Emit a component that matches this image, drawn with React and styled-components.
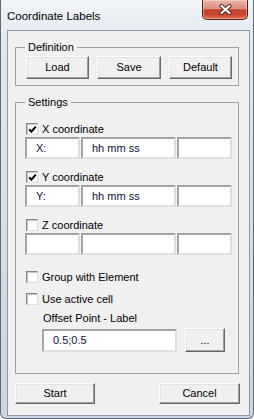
import React from "react";
import styled, { createGlobalStyle } from "styled-components";

const GlobalStyle = createGlobalStyle`
  html, body { margin: 0; padding: 0; background: #ffffff; }
  body { font-family: "Liberation Sans", Arial, sans-serif; }
`;

const Window = styled.div`
  box-sizing: border-box;
  width: 254px;
  height: 419px;
  display: flex;
  flex-direction: column;
  border: 1px solid #5f6b78;
  border-top: none;
  border-radius: 0 0 6px 6px;
  background: linear-gradient(180deg, #f1f4f8 0%, #e2e9f1 10%, #d3dde8 60%, #cbd6e2 100%);
  padding: 0 3px 2px 6px;
  font: 11px/13px "Liberation Sans", Arial, sans-serif;
  color: #000;
`;

const TitleBar = styled.div`
  flex: none;
  height: 30px;
  display: flex;
  align-items: flex-start;
`;

const Title = styled.div`
  margin-top: 10px;
  font-size: 11.5px;
  line-height: 13px;
  color: #000;
`;

const CloseButton = styled.div`
  box-sizing: border-box;
  margin-left: auto;
  margin-right: 2px;
  width: 46px;
  height: 20px;
  display: flex;
  align-items: center;
  justify-content: center;
  border: 1px solid #5b1e16;
  border-top: none;
  border-radius: 0 0 5px 5px;
  background: linear-gradient(180deg, #ecb4a8 0%, #dc8f80 45%, #c4432c 52%, #c9472f 78%, #de7450 100%);
  box-shadow: inset 0 0 0 1px rgba(255, 255, 255, 0.35);
`;

const Client = styled.div`
  flex: 1;
  display: flex;
  flex-direction: column;
  background: #f0f0f0;
  border: 1px solid #8c99a8;
`;

const Group = styled.fieldset`
  box-sizing: border-box;
  width: 224px;
  margin: 9px 0 0 7px;
  padding: 0;
  border: 1px solid #a0a0a0;
  min-inline-size: 0;
`;

const GroupLabel = styled.legend`
  margin-left: 9px;
  padding: 0 3px;
  font-size: 11px;
  line-height: 14px;
  color: #000;
`;

const ButtonRow = styled.div`
  display: grid;
  grid-template-columns: 63px 64px 63px;
  column-gap: 8px;
  padding: 2px 0 6px 10px;
`;

const Button = styled.button`
  box-sizing: border-box;
  width: ${(p) => (p.$w ? `${p.$w}px` : "auto")};
  height: ${(p) => p.$h || 23}px;
  margin: 0;
  padding: 0;
  background: #f0f0f0;
  border: 1px solid;
  border-color: #ffffff #696969 #696969 #ffffff;
  box-shadow: inset -1px -1px 0 #a0a0a0, inset 1px 1px 0 #e3e3e3;
  font: 11px/13px "Liberation Sans", Arial, sans-serif;
  color: #000;
`;

const SettingsBody = styled.div`
  display: flex;
  flex-direction: column;
  align-items: flex-start;
  padding: 0 0 21px 9px;
`;

const CheckRow = styled.label`
  display: flex;
  align-items: center;
  gap: 4px;
  height: 12px;
  margin: ${(p) => p.$mt || 0}px 0 0 1px;
  color: #000;
`;

const Box = styled.span`
  box-sizing: border-box;
  flex: none;
  width: 12px;
  height: 12px;
  display: flex;
  align-items: center;
  justify-content: center;
  background: #fff;
  border: 1px solid;
  border-color: #858585 #dcdcdc #dcdcdc #858585;
  box-shadow: inset 1px 1px 0 #c4c4c4;
`;

const FieldRow = styled.div`
  display: grid;
  grid-template-columns: 55px 95px 55px;
  column-gap: 1px;
  margin-top: 2px;
`;

const Field = styled.div`
  box-sizing: border-box;
  width: ${(p) => (p.$w ? `${p.$w}px` : "auto")};
  height: ${(p) => p.$h || 22}px;
  display: flex;
  align-items: center;
  padding-left: 9px;
  background: #fff;
  border: 2px solid;
  border-color: #a4a4a4 #dedede #dedede #a4a4a4;
  color: #101038;
  white-space: nowrap;
`;

const OffsetLabel = styled.div`
  margin: 7px 0 0 18px;
  line-height: 13px;
  color: #000;
`;

const OffsetRow = styled.div`
  display: flex;
  align-items: center;
  gap: 8px;
  margin: 3px 0 0 17px;
`;

const Footer = styled.div`
  display: flex;
  justify-content: space-between;
  margin-top: 9px;
  padding: 0 9px 0 7px;
`;

const Check = ({ checked }) => (
  <Box>
    {checked && (
      <svg width="9" height="9" viewBox="0 0 9 9">
        <path d="M1.2 4.2 L3.4 6.6 L7.8 1.6" fill="none" stroke="#000" strokeWidth="2.1" />
      </svg>
    )}
  </Box>
);

const CoordBlock = ({ label, checked, mt, a, b }) => (
  <>
    <CheckRow $mt={mt}>
      <Check checked={checked} />
      {label}
    </CheckRow>
    <FieldRow>
      <Field>{a}</Field>
      <Field>{b}</Field>
      <Field />
    </FieldRow>
  </>
);

export default function App() {
  return (
    <>
      <GlobalStyle />
      <Window>
        <TitleBar>
          <Title>Coordinate Labels</Title>
          <CloseButton>
            <svg width="13" height="11" viewBox="0 0 13 11">
              <path d="M2.5 2 L10.5 9 M10.5 2 L2.5 9" stroke="#3b2420" strokeWidth="4" strokeLinecap="round" />
              <path d="M2.5 2 L10.5 9 M10.5 2 L2.5 9" stroke="#ffffff" strokeWidth="2.2" strokeLinecap="round" />
            </svg>
          </CloseButton>
        </TitleBar>
        <Client>
          <Group>
            <GroupLabel>Definition</GroupLabel>
            <ButtonRow>
              <Button>Load</Button>
              <Button>Save</Button>
              <Button>Default</Button>
            </ButtonRow>
          </Group>
          <Group>
            <GroupLabel>Settings</GroupLabel>
            <SettingsBody>
              <CoordBlock label="X coordinate" checked mt={14} a="X:" b="hh mm ss" />
              <CoordBlock label="Y coordinate" checked mt={12} a="Y:" b="hh mm ss" />
              <CoordBlock label="Z coordinate" mt={12} />
              <CheckRow $mt={16}>
                <Check />
                Group with Element
              </CheckRow>
              <CheckRow $mt={10}>
                <Check />
                Use active cell
              </CheckRow>
              <OffsetLabel>Offset Point - Label</OffsetLabel>
              <OffsetRow>
                <Field $w={135} $h={23}>0.5;0.5</Field>
                <Button $w={40} $h={24}>...</Button>
              </OffsetRow>
            </SettingsBody>
          </Group>
          <Footer>
            <Button $w={80} $h={21}>Start</Button>
            <Button $w={81} $h={21}>Cancel</Button>
          </Footer>
        </Client>
      </Window>
    </>
  );
}
